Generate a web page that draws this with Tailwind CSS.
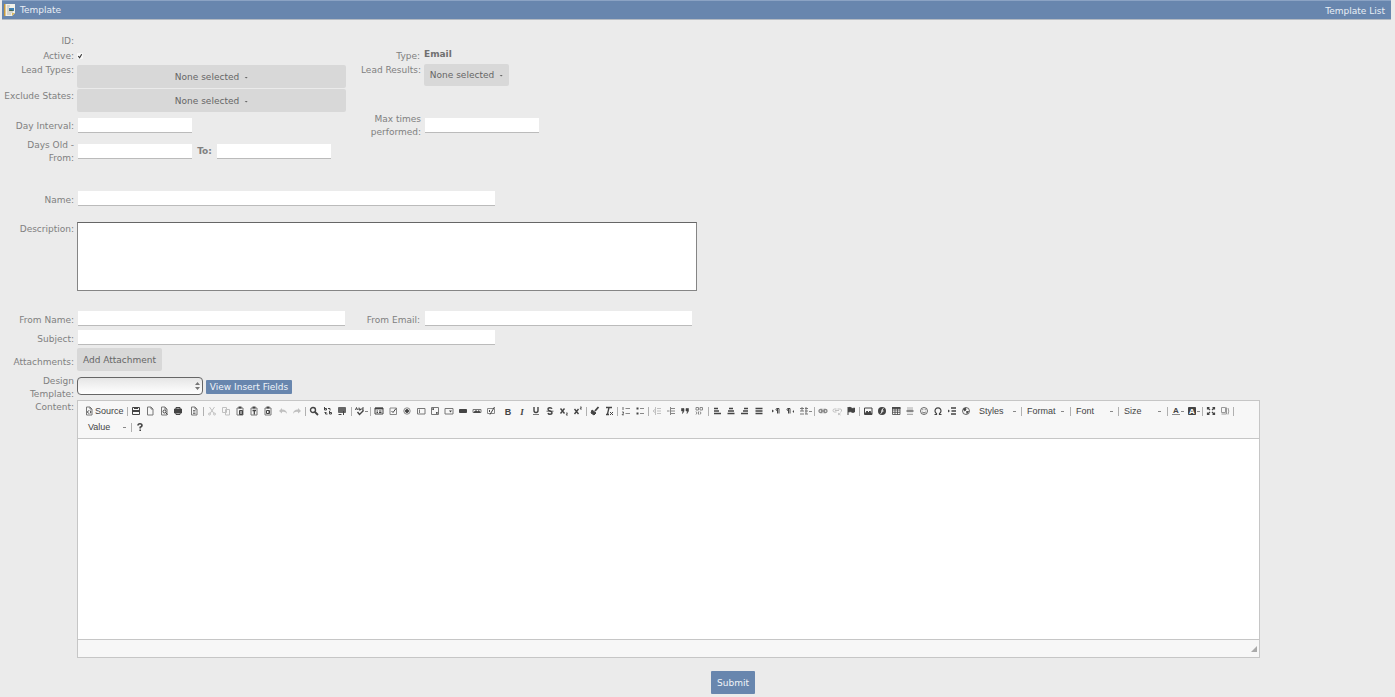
<!DOCTYPE html>
<html lang="en">
<head>
<meta charset="utf-8">
<title>Template</title>
<script src="https://cdn.jsdelivr.net/npm/@tailwindcss/browser@4"></script>
</head>
<body class="min-h-screen bg-[#ebebeb] font-['DejaVu_Sans',sans-serif] text-[9px] leading-[13px] text-[#808080]">
<header class="ml-[2px] mr-1 flex h-[20px] items-center justify-between border-t border-b border-t-[#8ba3c4] border-b-[#b4bac2] bg-[#6886ae] pl-[2px] pr-[6px] text-[#e9eef5]">
  <h1 class="flex items-center gap-1">
    <svg class="h-[14px] w-3" viewBox="0 0 12 14" aria-hidden="true"><path d="M1 1h10v9l-3 3H1z" fill="#f1f1e9"/><path d="M0 1h1.500v12H0z" fill="#c99a3c"/><path d="M3 3h3M3 5h2M3 7h2M3 9h6M3 11h4" stroke="#a9aaa3" stroke-width=".8"/><path d="M5 5h5v3H5z" fill="#3e83b9"/><path d="M5 7.500l2-1 3 1.500H5z" fill="#4b6a4c"/><path d="M8 13v-3h3z" fill="#d9b65c"/></svg>
    Template
  </h1>
  <a href="#" class="pt-[2px]">Template List</a>
</header>

<form class="pt-[15px]" onsubmit="return false">
  <div class="flex h-[15px]"><span class="w-[74px] text-right">ID:</span></div>
  <div class="flex h-[14px]">
    <label for="active" class="w-[74px] text-right">Active:</label>
    <span class="ml-[3px] mt-[3px] grid size-[7px]">
      <input id="active" type="checkbox" checked class="peer col-start-1 row-start-1 size-[6px] appearance-none rounded-[1px] bg-[#f8f8f8]">
      <svg class="pointer-events-none invisible col-start-1 row-start-1 size-[6px] peer-checked:visible" viewBox="0 0 7 7" fill="none" stroke="#333" stroke-width="1.300" aria-hidden="true"><path d="M1.500 3.500L3 5.500 5.500 1.500"/></svg>
    </span>
    <span class="ml-[262px] w-[74px] text-right">Type:</span>
    <strong class="-mt-px ml-1 leading-[11px] text-[#707070]">Email</strong>
  </div>
  <div class="flex h-[49px]">
    <div class="flex w-[346px] flex-col gap-px">
      <div class="flex h-6">
        <label for="types" class="w-[74px] text-right">Lead Types:</label>
        <button id="types" type="button" class="ml-[3px] mt-px flex h-[23px] flex-1 items-center justify-center gap-[5px] rounded-[2px] bg-[#d8d8d8] pt-[2px] text-[#666]">None selected <i class="h-[2px] w-1 bg-[#666] [clip-path:polygon(0_0,100%_0,50%_100%)]"></i></button>
      </div>
      <div class="flex h-[23px]">
        <label for="states" class="w-[74px] pt-px text-right whitespace-nowrap">Exclude States:</label>
        <button id="states" type="button" class="ml-[3px] flex h-[23px] flex-1 items-center justify-center gap-[5px] rounded-[2px] bg-[#d8d8d8] pt-[2px] text-[#666]">None selected <i class="h-[2px] w-1 bg-[#666] [clip-path:polygon(0_0,100%_0,50%_100%)]"></i></button>
      </div>
    </div>
    <label for="results" class="w-[75px] text-right">Lead Results:</label>
    <button id="results" type="button" class="ml-[3px] flex h-[22px] w-[85px] items-center justify-center gap-[5px] rounded-[2px] bg-[#d8d8d8] pt-px text-[#666] whitespace-nowrap">None selected <i class="h-[2px] w-1 bg-[#666] [clip-path:polygon(0_0,100%_0,50%_100%)]"></i></button>
  </div>
  <div class="flex h-[26px] items-center">
    <label for="day" class="w-[74px] text-right">Day Interval:</label>
    <input id="day" class="mb-[2px] ml-1 h-[15px] w-[114px] border-b border-[#bbb] bg-white">
    <label for="max" class="ml-[159px] w-[70px] text-right">Max times performed:</label>
    <input id="max" class="mb-[2px] ml-1 h-[15px] w-[114px] border-b border-[#bbb] bg-white">
  </div>
  <div class="flex h-[26px] items-center">
    <label for="from" class="w-[74px] text-right">Days Old - From:</label>
    <input id="from" class="mb-[2px] ml-1 h-[15px] w-[114px] border-b border-[#bbb] bg-white">
    <label for="to" class="w-[25px] pb-[2px] text-center font-bold">To:</label>
    <input id="to" class="mb-[2px] h-[15px] w-[114px] border-b border-[#bbb] bg-white">
  </div>
  <div class="mt-[26px] flex h-[15px] items-center">
    <label for="name" class="w-[74px] pt-1 text-right">Name:</label>
    <input id="name" class="ml-1 h-[15px] w-[417px] border-b border-[#bbb] bg-white">
  </div>
  <div class="mt-4 flex">
    <label for="desc" class="w-[74px] pt-px text-right">Description:</label>
    <textarea id="desc" class="ml-[3px] block h-[69px] w-[620px] resize-none border border-[#858585] border-t-[#666] bg-white"></textarea>
  </div>
  <div class="mt-5 flex h-[15px] items-center">
    <label for="fname" class="w-[74px] pt-1 text-right">From Name:</label>
    <input id="fname" class="ml-1 h-[15px] w-[267px] border-b border-[#bbb] bg-white">
    <label for="femail" class="w-[75px] pt-1 text-right">From Email:</label>
    <input id="femail" class="ml-[5px] h-[15px] w-[267px] border-b border-[#bbb] bg-white">
  </div>
  <div class="mt-1 flex h-[15px] items-center">
    <label for="subject" class="w-[74px] pt-1 text-right">Subject:</label>
    <input id="subject" class="ml-1 h-[15px] w-[417px] border-b border-[#bbb] bg-white">
  </div>
  <div class="mt-[3px] flex h-[23px] items-center">
    <label for="attach" class="w-[74px] pt-[6px] text-right">Attachments:</label>
    <button id="attach" type="button" class="ml-[3px] h-[23px] w-[85px] rounded-[2px] bg-[#d8d8d8] pt-[2px] text-[#666] whitespace-nowrap">Add Attachment</button>
  </div>
  <div class="mt-[3px] flex h-[26px]">
    <label for="design" class="w-[74px] pt-px text-right">Design Template:</label>
    <div class="ml-[3px] mt-[3px] grid h-[18px] w-[126px]">
      <select id="design" class="col-start-1 row-start-1 appearance-none rounded-[4px] border border-[#666] bg-linear-to-b from-[#e6e6e6] to-white"><option></option></select>
      <svg class="pointer-events-none col-start-1 row-start-1 mr-[3px] h-2 w-[5px] self-center justify-self-end" viewBox="0 0 5 8" fill="#777" aria-hidden="true"><path d="M0 3L2.500 0 5 3zM0 5h5L2.500 8z"/></svg>
    </div>
    <button type="button" class="ml-[3px] mt-[6px] h-[14px] w-[86px] rounded-[1px] bg-[#6886ae] text-[#f0f4f9] whitespace-nowrap">View Insert Fields</button>
  </div>
  <div class="flex">
    <span class="w-[74px] pt-px text-right">Content:</span>
    <section aria-label="Content editor" class="ml-[3px] mr-[135px] flex-1 border border-[#c6c6c6] bg-white">
      <div id="bar" role="toolbar" class="flex min-h-[37px] flex-wrap content-start border-b border-[#c6c6c6] bg-[#f7f7f7] pt-[2px] pr-1 pb-[3px] pl-1 font-['Liberation_Sans',sans-serif] text-[#444]"></div>
      <div contenteditable="true" aria-label="Body" class="h-[200px] outline-none"></div>
      <div class="flex h-[18px] items-center justify-end border-t border-[#c6c6c6] bg-[#f7f7f7] pr-[2px]">
        <svg class="size-[6px]" viewBox="0 0 6 6" fill="#aaa" aria-hidden="true"><path d="M6 0v6H0z"/></svg>
      </div>
    </section>
  </div>
  <div class="mt-[13px] flex justify-center pl-[71px] pb-[3px]">
    <button type="submit" class="h-[23px] w-11 rounded-[1px] bg-[#6886ae] pt-[2px] text-[#f0f4f9]">Submit</button>
  </div>
</form>

<script>
// Toolbar entries: a number is a gap, '|n' a separator n pixels wide,
// '=Text' a drop-down, otherwise [label, svg body, flags] (d: disabled, m: has menu).
const page = '<path d="M2.500 1h3.500l2 2v6h-5.500zM6 1v2h2" stroke="#777"/>';
const clip = '<path d="M2 2h6v7h-6z" stroke="#777"/><path d="M3.500 1.500h3" stroke-width="2"/>';
const letter = (t, extra = '') => `<text x="5" y="8.500" text-anchor="middle" font-size="9" font-weight="bold" fill="currentColor" stroke="none" ${extra}>${t}</text>`;
const items = [
  ['Source', page + '<path d="M4.500 4.500L3.500 6l1 1.500M6 4.500L7 6 6 7.500"/>', 's'], '|3',
  ['Save', '<path d="M1.500 1.500h7v7h-7z"/><path d="M2 5h6" stroke-width="2"/><path d="M3 2.500h4"/>'],
  ['New Page', page],
  ['Preview', page + '<circle cx="5.500" cy="5.500" r="1.500"/><path d="M6.500 6.500l2 2"/>'],
  ['Print', '<path d="M3 1.500h4v7h-4z"/><path d="M1.500 3h7v4h-7z" fill="currentColor"/><path d="M3.500 7.500h3" stroke="#aaa"/>'], 2,
  ['Templates', page + '<path d="M4 4.500h2.500M4 6h2.500M4 7.500h2.500" stroke-width=".7"/>'], '|4',
  ['Cut', '<path d="M2.500 1L7 7.500M7.500 1L3 7.500"/><circle cx="2.500" cy="8" r="1"/><circle cx="7.500" cy="8" r="1"/>', 'd'],
  ['Copy', '<path d="M1.500 1.500h4v5h-4zM4.500 3.500h4v5.500h-4z" fill="#f7f7f7"/>', 'd'],
  ['Paste', clip + '<path d="M4.500 4.500h3v4h-3z" fill="#999"/>'],
  ['Paste as plain text', clip + '<path d="M3.500 4.500h3.500M5.300 4.500v4" stroke-width="1.300"/>'],
  ['Paste from Word', clip + '<path d="M3.500 4.500h3v3h-3z"/><path d="M5 6h2"/>'], 1,
  ['Undo', '<path d="M4 2L1 5l3 2.500V6c2-.500 4 0 5 2 0-3-2-4.500-5-4.500z" fill="currentColor" stroke="none"/>', 'd'],
  ['Redo', '<path d="M6 2l3 3-3 2.500V6C4 5.500 2 6 1 8c0-3 2-4.500 5-4.500z" fill="currentColor" stroke="none"/>', 'd'], '|3',
  ['Find', '<circle cx="4" cy="4" r="2.500" stroke-width="1.400"/><path d="M6 6l3 3" stroke-width="1.800"/>'],
  ['Replace', '<path d="M1.500 1v3h2V2.500h-2M6.500 5v3h2V6.500h-2M5 2.500h2v2M4.500 8h-2V6M1.500 7l1-1 1 1"/>'],
  ['Select All', '<path d="M1.500 1.500h7v5h-7z" fill="#888" stroke="#666"/><path d="M2 3h6M2 5h6M1.500 8.500h3M6.500 5v4"/>'], '|4',
  ['Spell Check', '<path d="M.500 4l1-2.500 1 2.500M4 1.500v2.500h1.500V3H4M9 2H7v2h2"/><path d="M2.500 6l2 2.500L8.500 4.500" stroke-width="1.400"/>', 'm'], '|3',
  ['Form', '<path d="M1 2h8v6h-8z"/><path d="M1 2.500h8" stroke-width="1.800"/><path d="M2.500 5h1.500M5 5h2.500M2.500 6.500h1.500M5 6.500h2.500"/>'],
  ['Checkbox', '<path d="M2 2h6.500v6.500h-6.500z" stroke="#888"/><path d="M3.500 5l1.500 1.500L8 2.500"/>'],
  ['Radio Button', '<circle cx="5" cy="5" r="3.200" stroke="#888"/><circle cx="5" cy="5" r="1.500" fill="currentColor"/>'],
  ['Text Field', '<path d="M1.500 2.500h7.500v5.500h-7.500zM3.500 3.500v3.500" stroke="#777"/>'],
  ['Textarea', '<path d="M1.500 1.500h7v7h-7z" stroke="#777"/><path d="M3 4V3h1M7 6v1h-1" stroke-width="1.300"/>'],
  ['Selection Field', '<path d="M1 2.500h8v5.500h-8z" stroke="#777"/><path d="M5 4.500h3L6.500 6.500z" fill="currentColor" stroke="none"/>'],
  ['Button', '<path d="M1.500 3.500h7v3h-7z" fill="currentColor"/>'],
  ['Image Button', '<path d="M1 3.500h8v3h-8z" stroke="#777"/><path d="M2 6l2-1.500 1.500 1L7 4.500l1 1.500v.500H2z" fill="currentColor" stroke-width=".7"/>'],
  ['Hidden Field', '<path d="M1.500 2.500h7v5h-7z" stroke="#888"/><path d="M8.500 1L4 8.500M3.500 4v2"/>'], 3,
  ['Bold', letter('B')],
  ['Italic', letter('I', 'font-style="italic" font-family="Liberation Serif"')],
  ['Underline', '<path d="M3 1v3.500q0 2 2 2t2-2V1" stroke-width="1.400"/><path d="M2 8.500h6" stroke="#777"/>'],
  ['Strikethrough', '<path d="M7 2.800Q6.500 1.700 5 1.700 3 1.700 3 3.200 3 4.500 5 5 7 5.500 7 6.800 7 8.300 5 8.300 3.300 8.300 3 7" stroke-width="1.400"/><path d="M1.500 5.200h7" stroke-width=".8"/>'],
  ['Subscript', '<path d="M1.500 2.500l4 5M5.500 2.500l-4 5" stroke-width="1.400"/><path d="M7 7h1.500L7 9h2" stroke-width=".8"/>'],
  ['Superscript', '<path d="M1.500 3l4 5M5.500 3l-4 5" stroke-width="1.400"/><path d="M7 1h1.500L7 3h2" stroke-width=".8"/>'], '|3',
  ['Copy Formatting', '<path d="M8.500 1L5 5" stroke-width="1.800"/><path d="M2 4l4 3-2 2-3-2z" fill="currentColor"/>'],
  ['Remove Format', '<path d="M2 1.500h6M5 1.500L3.500 8M2 8.500h3" stroke-width="1.300"/><path d="M6 6l3 3M9 6L6 9"/>'], '|3',
  ['Numbered List', '<path d="M2 1v3M1 6h1.500v1.200L1 8.800h2" stroke-width=".8"/><path d="M4.500 2.500h4.500M4.500 7.500h4.500" stroke="#888"/>'],
  ['Bulleted List', '<path d="M1.500 2.500h2M1.500 7.500h2" stroke-width="2"/><path d="M5 2.500h4M5 7.500h4" stroke="#888"/>'], '|3',
  ['Decrease Indent', '<path d="M5 2.500h4M5 5h4M5 7.500h4M3.500 1v8M3 3.500L1 5l2 1.500"/>', 'd'],
  ['Increase Indent', '<path d="M5 2.500h4M5 5h4M5 7.500h4M4.500 1v8M1 5h2.500" stroke="#888"/>'],
  ['Block Quote', '<path d="M1.500 2.500h2.500v2.500L2.500 7.500 3 5H1.500zM6 2.500h2.500v2.500L7 7.500 7.500 5H6z" fill="currentColor" stroke-width=".6"/>'],
  ['Div Container', '<path d="M2 1.500h2.500v2.500h-2.500zM6 1.500h2.500v2.500h-2.500zM2 5.500q2 1.500 0 3M4.500 5.500v3M6 5.500q2 1.500 0 3" stroke="#888"/>'], '|4',
  ['Align Left', '<path d="M2 2.500h4M2 5h5M2 7.500h7" stroke-width="1.500"/>'],
  ['Center', '<path d="M3 2.500h4M2 5h6M1.500 7.500h7" stroke-width="1.500"/>'],
  ['Align Right', '<path d="M4 2.500h4M3 5h5M1 7.500h7" stroke-width="1.500"/>'],
  ['Justify', '<path d="M1.500 2.500h7M1.500 5h7M1.500 7.500h7" stroke-width="1.500"/>'], 3,
  ['Left to right', '<path d="M1 3.500L3 5 1 6.500z" fill="currentColor" stroke="none"/><path d="M8 2.500H6a1 1 0 0 0 0 2h.500M6.500 2.500v5M8 2.500v5"/>'],
  ['Right to left', '<path d="M9 4L7.500 5.500 9 7z" fill="currentColor" stroke="none"/><path d="M5 2.500H3a1 1 0 0 0 0 2h.500M3.500 2.500v5M5 2.500v5"/>'],
  ['Language', '<path d="M1 2.500h4M3 1v4M1 5h4M1 8h4M6 2.500h3M7 1v7M6 5h3M6 8h3" stroke="#777"/>', 'm'], '|3',
  ['Link', '<path d="M4.500 3.500h-2a1.500 1.500 0 0 0 0 3h2M5.500 3.500h2a1.500 1.500 0 0 1 0 3h-2M3 5h4" stroke="#888" stroke-width="1.300"/>'],
  ['Unlink', '<path d="M4.500 3h-2a1.500 1.500 0 0 0 0 3h2M5.500 3h2a1.500 1.500 0 0 1 1 3M3 4.500h4M6 7l2.500 2M8.500 7L6 9"/>', 'd'],
  ['Anchor', '<path d="M2 1v8"/><path d="M2.500 1.500q2-.500 3 .500t3 0v4q-2 .800-3 0t-3 0z" fill="currentColor"/>'], '|3',
  ['Image', '<path d="M1.500 2h7.500v6.500h-7.500z"/><path d="M2 8l2-3 1.500 1.500L7 5l1.500 3z" fill="currentColor"/>'],
  ['Flash', '<circle cx="5" cy="5" r="4" fill="currentColor" stroke="none"/><path d="M6.500 2.500Q5 2.500 5 5T3.500 7.500M4.500 5h2" stroke="#fff"/>'],
  ['Table', '<path d="M1.500 1.500h7.500v7h-7.500zM1.500 4h7.500M1.500 6.300h7.500M4 2v6.500M6.500 2v6.500" stroke-width=".8"/><path d="M1 2h8.500" stroke-width="1.800"/>'],
  ['Horizontal Line', '<path d="M2 2h6M2 8.500h6" stroke="#aaa"/><path d="M1.500 5h7" stroke="#888" stroke-width="2"/><path d="M2 3.500h6M2 7h6" stroke="#ccc"/>'],
  ['Smiley', '<circle cx="5" cy="5" r="3.500" stroke-width=".8"/><path d="M3.200 6q1.800 2 3.600 0M3.800 3.200v1M6.200 3.200v1" stroke-width=".8"/>'],
  ['Special Character', '<path d="M1.500 8.500h2V7.500A3 3 0 1 1 6.500 7.500v1h2" stroke-width="1.200"/>'],
  ['Page Break', '<path d="M4 2h5M4 8h5M4.500 5H9" stroke-width="1.300"/><path d="M1 3.500L3 5 1 6.500z" fill="currentColor" stroke="none"/>'],
  ['IFrame', '<circle cx="5" cy="5" r="3.500" stroke-width=".8"/><path d="M2.500 3l2-1 .500 2-1.500 1zM5.500 5.500h2l-1.500 2z" fill="currentColor" stroke-width=".8"/>'], 2,
  '=Styles', '|3', '=Format', '|4', '=Font', '|3', '=Size', '|4',
  ['Text Color', '<text x="5" y="7" text-anchor="middle" font-size="8" font-weight="bold" fill="currentColor" stroke="none">A</text><path d="M1 8.500h8" stroke="#888"/>', 'm'],
  ['Background Color', '<path d="M1.500 1.500h7v7h-7z" fill="currentColor"/><text x="5" y="8" text-anchor="middle" font-size="8" font-weight="bold" fill="#fff" stroke="none">A</text>', 'm'], '|3',
  ['Maximize', '<path d="M1.500 3.500v-2h2M6.500 1.500h2v2M8.500 6.500v2h-2M3.500 8.500h-2v-2M2 2l2 2M8 2L6 4M2 8l2-2M8 8L6 6" stroke-width="1.200"/>'],
  ['Show Blocks', '<path d="M1.500 1.500h4v5h-4zM6.500 1.500v6.500h-5M8 2q1.500 3 0 6.500" stroke="#999"/>'], '|3',
  '=Value', '|4',
  ['About', '<path d="M3 3.500Q3 1.800 5 1.800T7 3.500Q7 4.500 5.200 5.300V6.500M5.200 7.500V9" stroke-width="1.600"/>']
];
const arrow = '<i class="h-px w-[3px] shrink-0 bg-[#888]"></i>';
const svg = b => `<svg class="size-[10px] shrink-0" viewBox="0 0 10 10" fill="none" stroke="currentColor" aria-hidden="true">${b}</svg>`;
document.getElementById('bar').innerHTML = items.map(it => {
  if (typeof it === 'number') return `<span style="width:${it}px"></span>`;
  if (it[0] === '|' && typeof it === 'string') return `<span class="flex h-4 items-center justify-center" style="width:${it.slice(1)}px"><i class="h-[9px] w-px bg-[#b0b0b0]"></i></span>`;
  if (it === '=Value') return `<button type="button" class="flex h-4 w-[47px] items-center justify-between pr-[3px] pl-[6px]">Value${arrow}</button>`;
  if (typeof it === 'string') return `<button type="button" class="flex h-4 w-[45px] items-center justify-between pr-1 pl-1">${it.slice(1)}${arrow}</button>`;
  const [name, body, flag] = it;
  if (flag === 's') return `<button type="button" class="flex h-4 w-11 items-center gap-px pl-[2px]">${svg(body)}${name}</button>`;
  if (flag === 'm') return `<button type="button" title="${name}" class="flex h-4 w-4 items-center pl-[2px]">${svg(body)}${arrow}</button>`;
  if (flag === 'd') return `<button type="button" disabled title="${name}" class="flex h-4 w-[14px] items-center justify-center opacity-30">${svg(body)}</button>`;
  return `<button type="button" title="${name}" class="flex h-4 w-[14px] items-center justify-center">${svg(body)}</button>`;
}).join('');
</script>
</body>
</html>
